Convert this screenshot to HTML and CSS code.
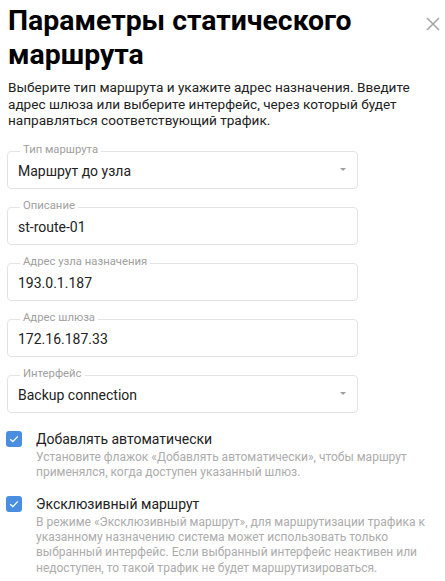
FILE: index.html
```html
<!DOCTYPE html>
<html lang="ru">
    <head>
        <title>Параметры статического маршрута</title>
        <meta charset="utf-8">
        <link rel="stylesheet" href="styles.css">
    </head>

    <body>
        <div id="dialogo">
            <div class="cabecalho">
                <h1 class="titulo">Параметры статического маршрута</h1>
                <button class="fechar" aria-label="Закрыть">
                    <svg width="14" height="14" viewBox="0 0 14 14"><path d="M1 1 L13 13 M13 1 L1 13" stroke="#a3a3a3" stroke-width="1.5" fill="none"/></svg>
                </button>
            </div>

            <p class="descricao">Выберите тип маршрута и укажите адрес назначения. Введите адрес шлюза или выберите интерфейс, через который будет направляться соответствующий трафик.</p>

            <div class="campos">
                <div class="campo">
                    <span class="rotulo">Тип маршрута</span>
                    <span class="valor">Маршрут до узла</span>
                    <span class="seta"></span>
                </div>
                <div class="campo">
                    <span class="rotulo">Описание</span>
                    <span class="valor">st-route-01</span>
                </div>
                <div class="campo">
                    <span class="rotulo">Адрес узла назначения</span>
                    <span class="valor">193.0.1.187</span>
                </div>
                <div class="campo">
                    <span class="rotulo">Адрес шлюза</span>
                    <span class="valor">172.16.187.33</span>
                </div>
                <div class="campo">
                    <span class="rotulo">Интерфейс</span>
                    <span class="valor">Backup connection</span>
                    <span class="seta"></span>
                </div>
            </div>

            <div class="opcao">
                <span class="caixa">
                    <svg width="10" height="8" viewBox="0 0 10 8"><path d="M1.2 4.2 L3.9 6.6 L8.8 1.4" stroke="#fff" stroke-width="1.3" fill="none"/></svg>
                </span>
                <div class="texto-opcao">
                    <div class="nome">Добавлять автоматически</div>
                    <div class="dica">Установите флажок «Добавлять автоматически», чтобы маршрут применялся, когда доступен указанный шлюз.</div>
                </div>
            </div>

            <div class="opcao">
                <span class="caixa">
                    <svg width="10" height="8" viewBox="0 0 10 8"><path d="M1.2 4.2 L3.9 6.6 L8.8 1.4" stroke="#fff" stroke-width="1.3" fill="none"/></svg>
                </span>
                <div class="texto-opcao">
                    <div class="nome">Эксклюзивный маршрут</div>
                    <div class="dica">В режиме «Эксклюзивный маршрут», для маршрутизации трафика к указанному назначению система может использовать только выбранный интерфейс. Если выбранный интерфейс неактивен или недоступен, то такой трафик не будет маршрутизироваться.</div>
                </div>
            </div>
        </div>
    </body>
</html>
```

FILE: styles.css
```css
*, *::before, *::after{
    box-sizing: border-box;
}

body{
    margin: 0;
    padding: 0;
    background: #fff;
    font-family: Roboto, "Noto Sans", sans-serif;
    color: #222;
}

#dialogo{
    padding: 4px 5px 0 7px;
}

.cabecalho{
    display: flex;
    align-items: flex-start;
    justify-content: space-between;
    gap: 10px;
}

.titulo{
    flex: 1;
    margin: 0 0 0 1px;
    font-size: 28.4px;
    line-height: 34px;
    font-weight: bold;
    color: #000;
}

.fechar{
    flex: none;
    border: none;
    background: none;
    padding: 0;
    margin: 13px 0 0 0;
    cursor: pointer;
    display: flex;
}

.descricao{
    margin: 7px 0 0 1px;
    font-size: 13.6px;
    line-height: 16.5px;
    color: #222;
}

.campos{
    display: flex;
    flex-direction: column;
    gap: 18px;
    margin-top: 22px;
    width: 351px;
}

.campo{
    position: relative;
    height: 38px;
    border: 1px solid #e3e3e3;
    border-radius: 4px;
    display: flex;
    align-items: center;
    padding: 0 10px;
}

.rotulo{
    position: absolute;
    top: -10px;
    left: 12px;
    padding: 0 3px;
    background: #fff;
    font-size: 11.3px;
    line-height: 15px;
    color: #a0a0a0;
}

.valor{
    flex: 1;
    font-size: 14px;
    color: #222;
    padding-top: 2px;
}

.seta{
    width: 0;
    height: 0;
    border-left: 3px solid transparent;
    border-right: 3px solid transparent;
    border-top: 3.5px solid #a0a0a0;
    margin-right: 1px;
}

.opcao{
    display: flex;
    gap: 14px;
    margin-top: 17px;
}

.opcao + .opcao{
    margin-top: 15px;
}

.caixa{
    flex: none;
    width: 16px;
    height: 16px;
    margin-left: -1px;
    border-radius: 3px;
    background: #4a8ee0;
    display: flex;
    align-items: center;
    justify-content: center;
    margin-top: 1px;
}

.nome{
    font-size: 14px;
    line-height: 18px;
    color: #222;
}

.dica{
    margin-top: 2px;
    font-size: 12px;
    line-height: 15.2px;
    color: #acacac;
}
```
